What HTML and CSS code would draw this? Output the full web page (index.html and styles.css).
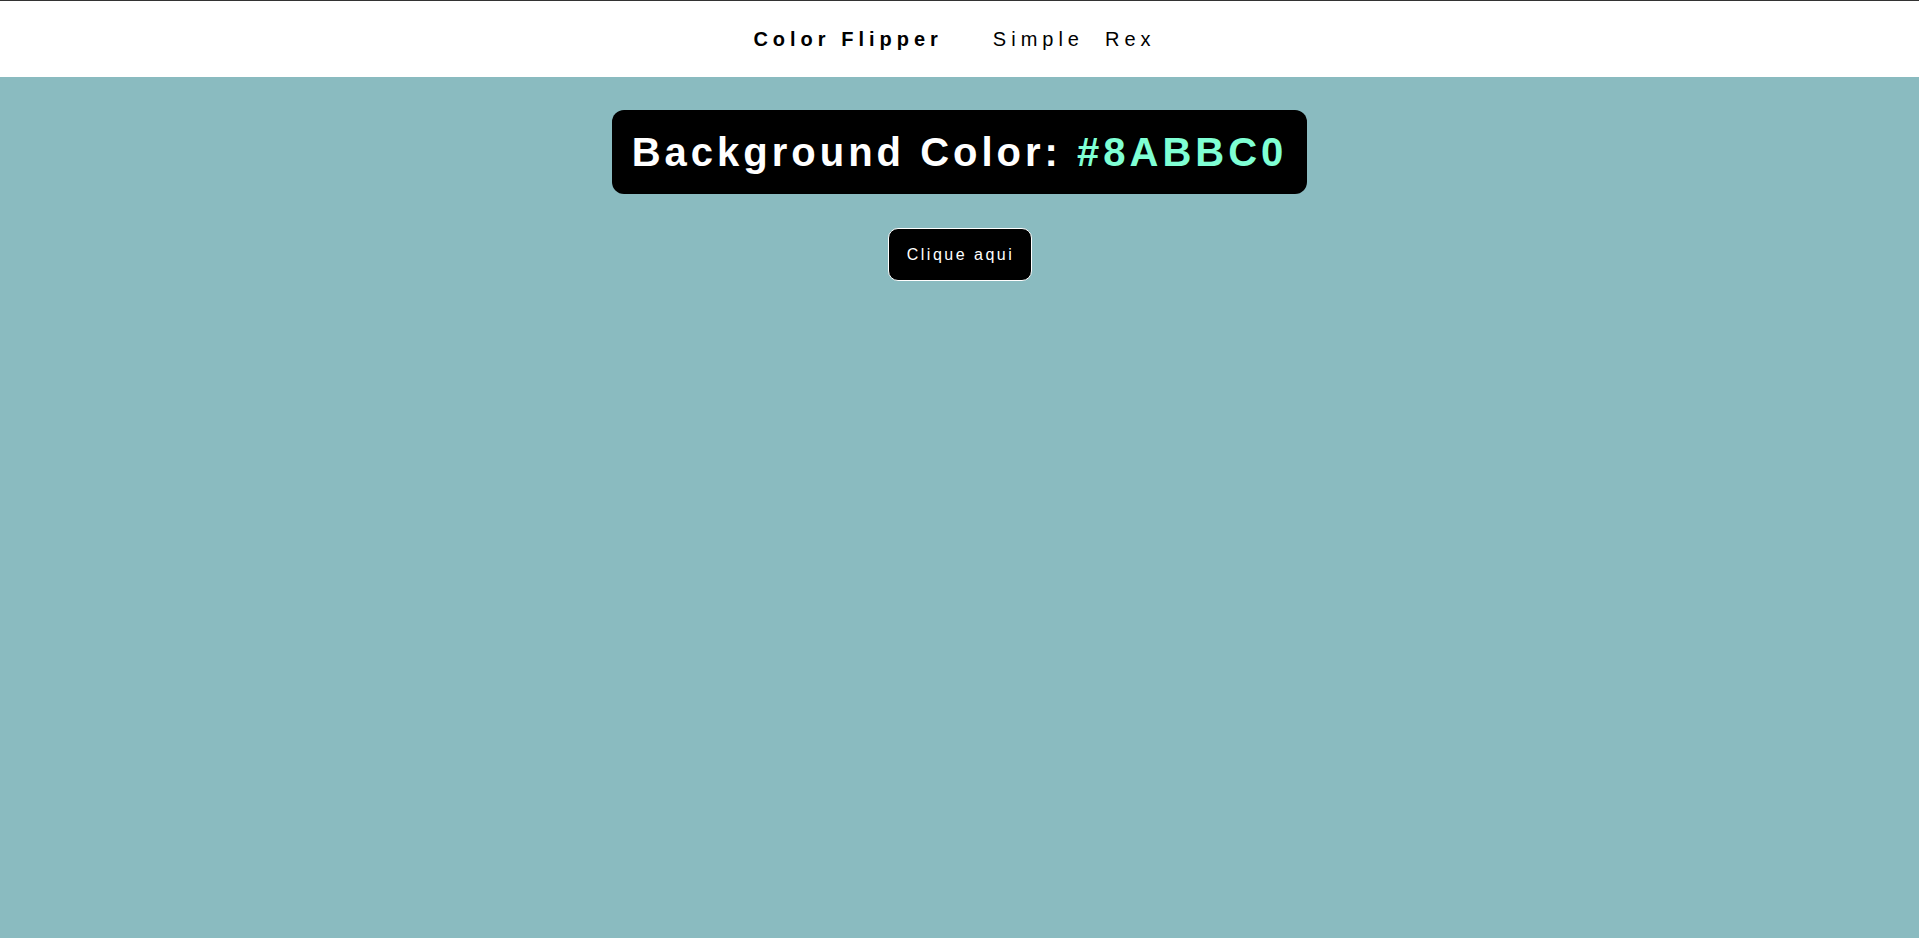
FILE: index.html
```html
<!DOCTYPE html>
<html lang="pt">
<head>
<meta charset="utf-8">
<title>Color Flipper</title>
<link rel="stylesheet" href="styles.css">
</head>
<body>
<nav class="nav">
  <span class="brand">Color Flipper</span>
  <div class="links">
    <a class="link" href="#">Simple</a>
    <a class="link" href="#">Rex</a>
  </div>
</nav>
<main class="main">
  <h2 class="title">Background Color: <span class="hex">#8ABBC0</span></h2>
  <button class="btn">Clique aqui</button>
</main>
</body>
</html>
```
FILE: styles.css
```css
html, body {
  margin: 0;
  padding: 0;
  height: 100%;
}
body {
  font-family: "Liberation Sans", Arial, sans-serif;
  background: #8ABBC0;
  border-top: 1px solid #333;
  box-sizing: border-box;
}
.nav {
  height: 76px;
  background: #fff;
  display: flex;
  align-items: center;
  justify-content: center;
  gap: 50px;
  padding-right: 10px;
  font-size: 20px;
  letter-spacing: 5px;
  color: #000;
}
.brand {
  font-weight: bold;
}
.links {
  display: flex;
  gap: 21px;
}
.link {
  color: #000;
  text-decoration: none;
}
.main {
  display: flex;
  flex-direction: column;
  align-items: center;
  padding-top: 33px;
  gap: 34px;
}
.title {
  margin: 0;
  background: #000;
  color: #fff;
  font-size: 40px;
  line-height: 46px;
  font-weight: bold;
  letter-spacing: 4px;
  border-radius: 12px;
  padding: 19px 20px 19px;
}
.hex {
  color: #7fffd4;
}
.btn {
  font-family: "Liberation Sans", Arial, sans-serif;
  background: #000;
  color: #fff;
  border: 1px solid #fff;
  border-radius: 10px;
  font-size: 16px;
  letter-spacing: 2.5px;
  width: 144px;
  height: 53px;
  padding: 0 0 0 2px;
  cursor: pointer;
}
```
